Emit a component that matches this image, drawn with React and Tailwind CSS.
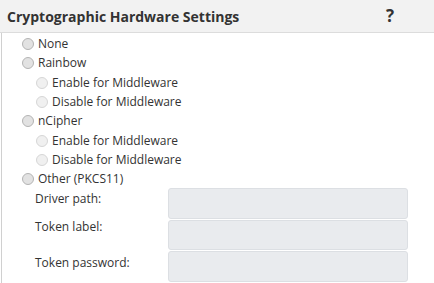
import React from "react";

function Radio({ sub, label }) {
  return (
    <div className={`flex items-center h-[19.3px] ${sub ? "pl-[34px]" : "pl-[20px]"}`}>
      <span
        className={`inline-block w-[12px] h-[12px] rounded-full border ${
          sub ? "border-[#d6d6d6] bg-[#f0f0f0]" : "border-[#b4b4b4] bg-[#e2e2e2]"
        }`}
      />
      <span className="ml-[4px] text-[#333] text-[12px]">{label}</span>
    </div>
  );
}

export default function App() {
  return (
    <div className="w-[434px] h-[283px] bg-white overflow-hidden" style={{ fontFamily: '"Open Sans", "Noto Sans", sans-serif' }}>
      <div className="h-[33px] bg-[#f2f2f2] border-b border-[#dcdcdc] flex items-center justify-between pl-[7px] pr-[40px]">
        <span className="text-[14px] font-bold text-[#333]">Cryptographic Hardware Settings</span>
        <span className="text-[17px] font-bold text-[#333]">?</span>
      </div>
      <div className="ml-[1px] border-l border-[#d0d0d0] h-[250px] pt-[1.4px]">
        <Radio label="None" />
        <Radio label="Rainbow" />
        <Radio sub label="Enable for Middleware" />
        <Radio sub label="Disable for Middleware" />
        <Radio label="nCipher" />
        <Radio sub label="Enable for Middleware" />
        <Radio sub label="Disable for Middleware" />
        <Radio label="Other (PKCS11)" />
        <div className="flex flex-col gap-[1px] mt-[-1px]">
          <div className="flex h-[31px]">
            <span className="w-[166px] shrink-0 pl-[33px] pt-[2px] text-[12px] text-[#333]">Driver path:</span>
            <div className="w-[240px] h-[31px] rounded-[3px] bg-[#e9ebee] border border-[#dcdfe3]" />
          </div>
          <div className="flex h-[30px]">
            <span className="w-[166px] shrink-0 pl-[33px] text-[12px] text-[#333] -mt-[2px]">Token label:</span>
            <div className="w-[240px] h-[30px] rounded-[3px] bg-[#e9ebee] border border-[#dcdfe3]" />
          </div>
          <div className="flex h-[31px]">
            <span className="w-[166px] shrink-0 pl-[33px] pt-[3px] text-[12px] text-[#333]">Token password:</span>
            <div className="w-[240px] h-[31px] rounded-[3px] bg-[#e9ebee] border border-[#dcdfe3]" />
          </div>
        </div>
      </div>
    </div>
  );
}
